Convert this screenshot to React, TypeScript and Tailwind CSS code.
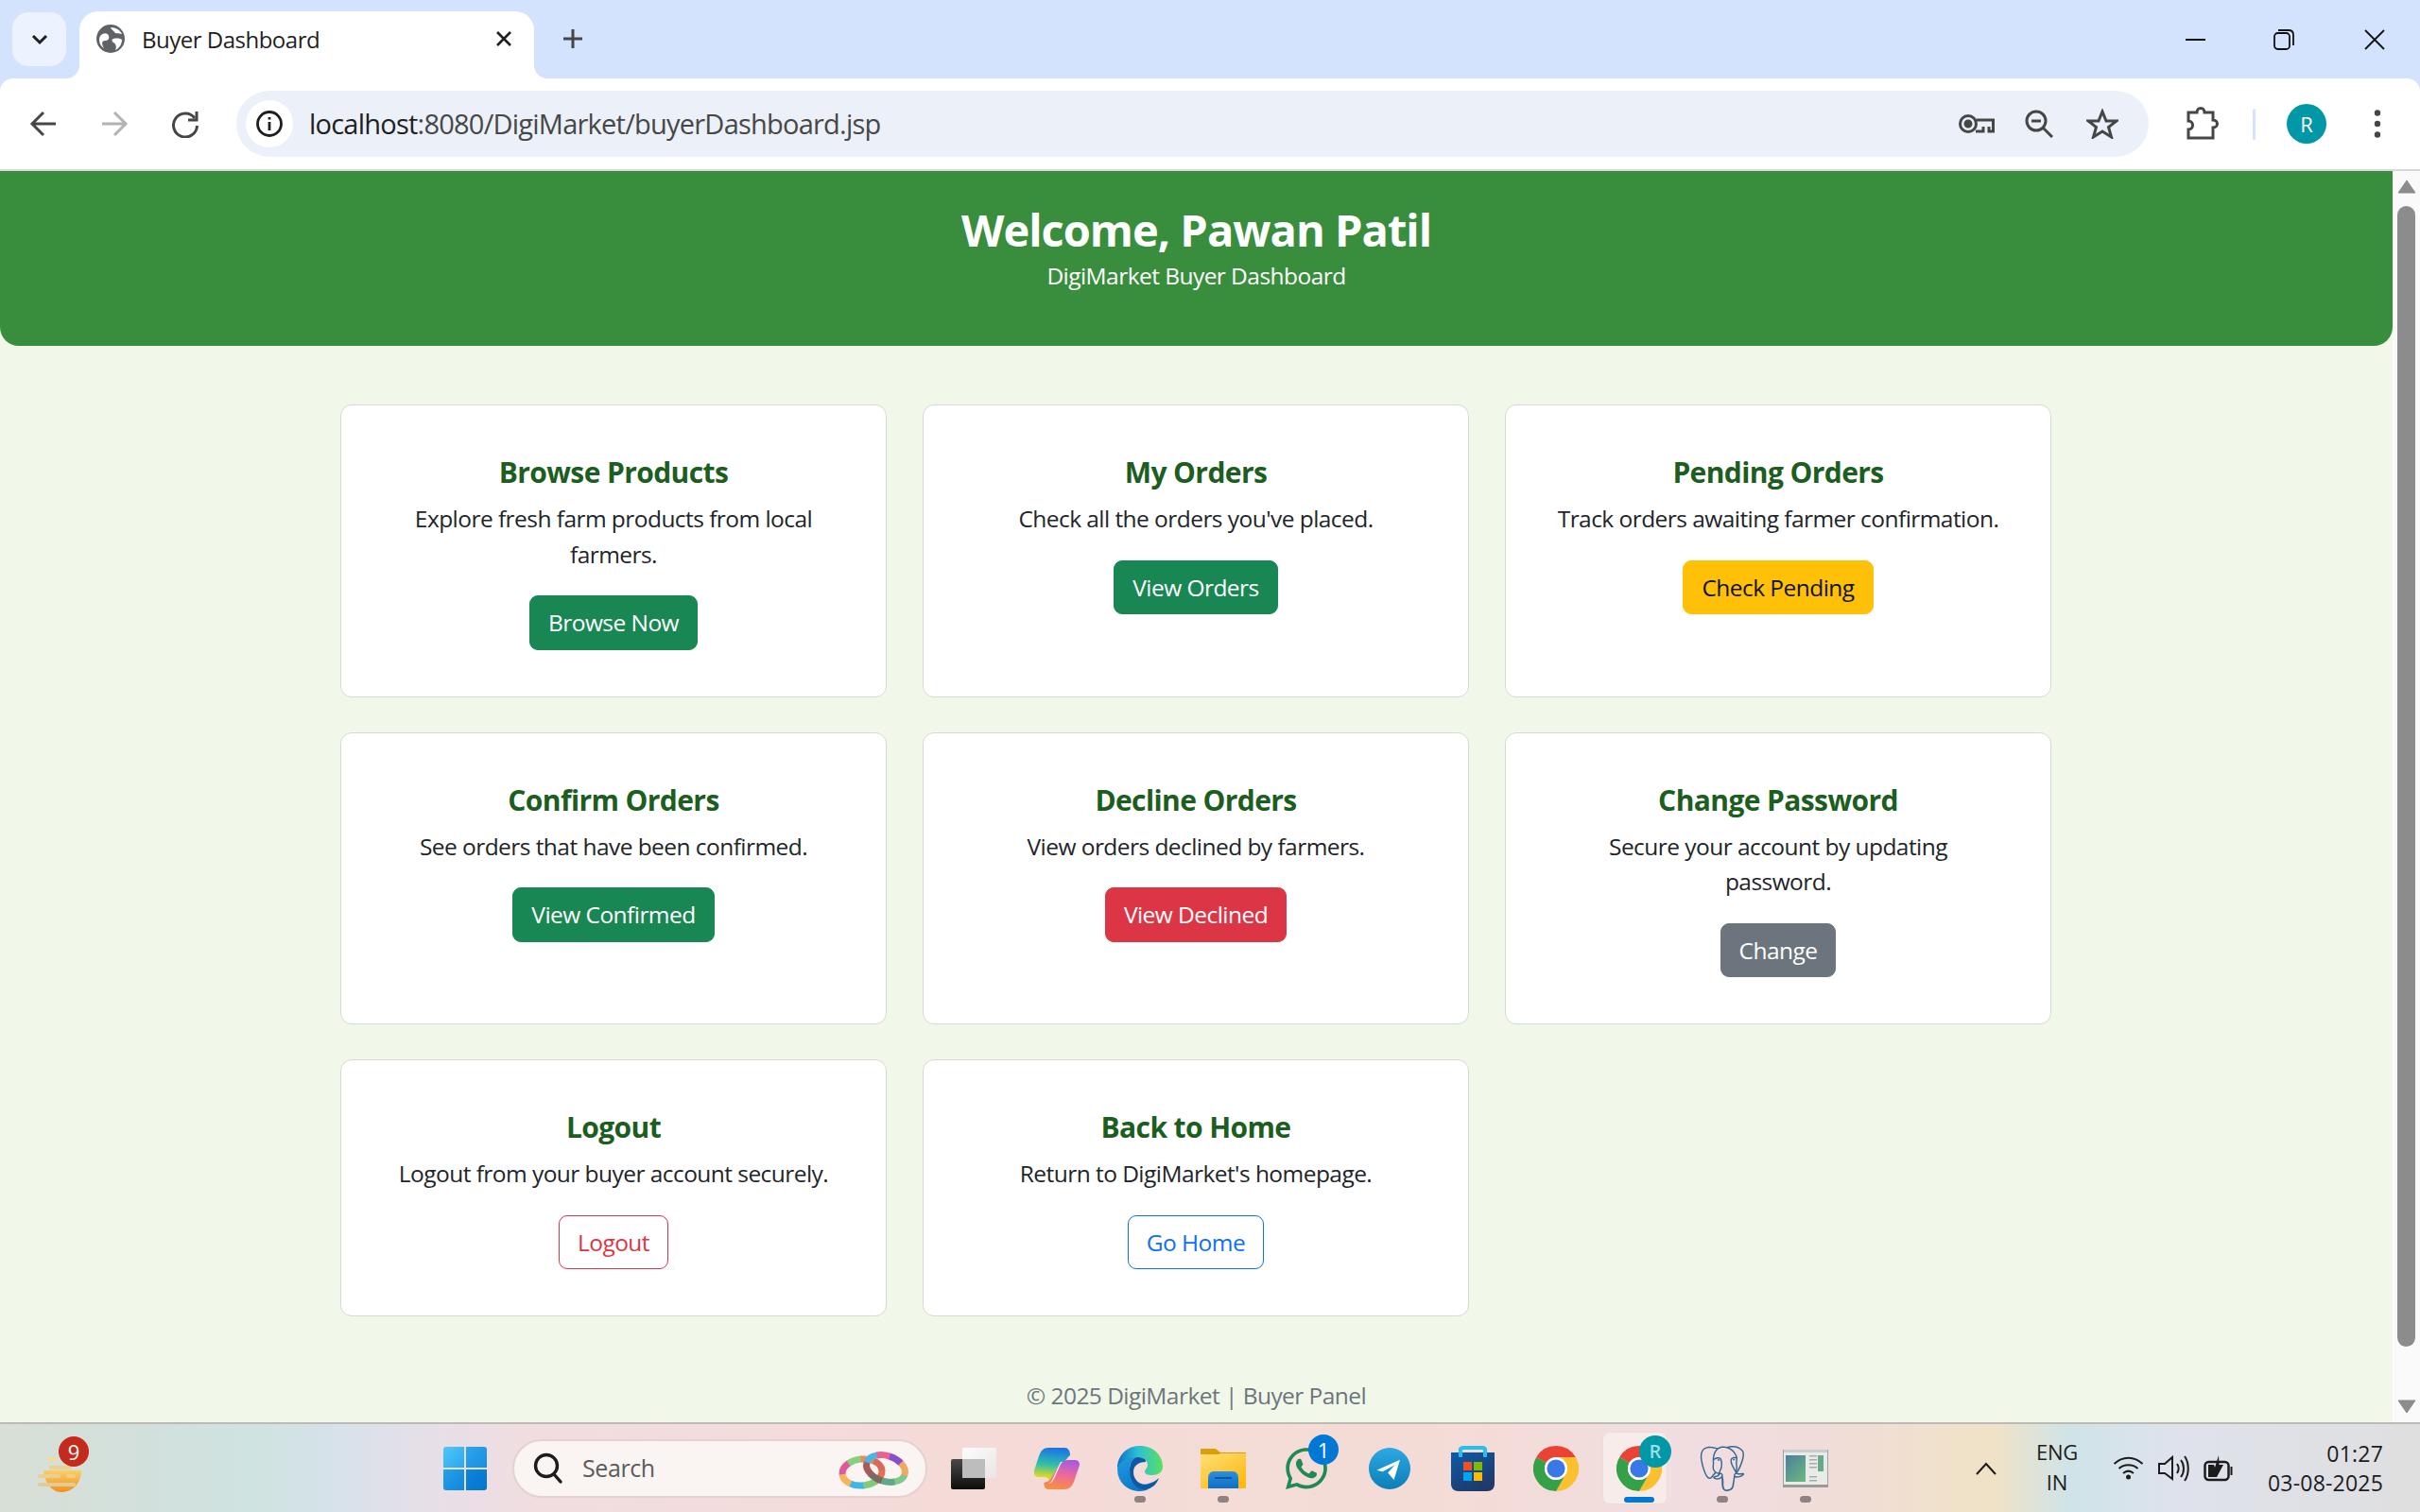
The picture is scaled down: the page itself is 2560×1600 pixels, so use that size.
import React from "react";
import { FaWhatsapp } from "react-icons/fa";
import { SiPostgresql } from "react-icons/si";

type CardT = { t: string; d: string; b: string; c: string };
const cards: CardT[] = [
  { t: "Browse Products", d: "Explore fresh farm products from local farmers.", b: "Browse Now", c: "bg-[#198754] text-white border-[#198754]" },
  { t: "My Orders", d: "Check all the orders you've placed.", b: "View Orders", c: "bg-[#198754] text-white border-[#198754]" },
  { t: "Pending Orders", d: "Track orders awaiting farmer confirmation.", b: "Check Pending", c: "bg-[#ffc107] text-[#111] border-[#ffc107]" },
  { t: "Confirm Orders", d: "See orders that have been confirmed.", b: "View Confirmed", c: "bg-[#198754] text-white border-[#198754]" },
  { t: "Decline Orders", d: "View orders declined by farmers.", b: "View Declined", c: "bg-[#dc3545] text-white border-[#dc3545]" },
  { t: "Change Password", d: "Secure your account by updating\npassword.", b: "Change", c: "bg-[#6c757d] text-white border-[#6c757d]" },
  { t: "Logout", d: "Logout from your buyer account securely.", b: "Logout", c: "bg-white text-[#dc3545] border-[#dc3545]" },
  { t: "Back to Home", d: "Return to DigiMarket's homepage.", b: "Go Home", c: "bg-white text-[#0d6efd] border-[#0d6efd]" },
];

function Card({ t, d, b, c }: CardT) {
  return (
    <div className="bg-white border border-[#d5d8d5] rounded-[12px] px-[50px] pt-[52px] pb-[49px] text-center">
      <h5 className="text-[30px] leading-[37px] font-bold text-[#1b5e20] mb-[12px] tracking-[-0.6px]">{t}</h5>
      <p className="text-[24.5px] leading-[37.5px] text-[#212529] mb-[25px] tracking-[-0.55px] whitespace-pre-line">{d}</p>
      <span className={"inline-block border text-[24.5px] leading-[37.5px] px-[19px] py-[9px] rounded-[9px] tracking-[-0.55px] " + c}>{b}</span>
    </div>
  );
}

function Chrome({ size = 48 }: { size?: number }) {
  return (
    <svg width={size} height={size} viewBox="0 0 48 48">
      <path d="M24 0A24 24 0 0 1 44.8 12H24A12 12 0 0 0 13.6 18L3.2 12A24 24 0 0 1 24 0Z" fill="#ea4335" />
      <path d="M44.8 12A24 24 0 0 1 24 48L34.4 30A12 12 0 0 0 24 12Z" fill="#fbc02d" />
      <path d="M3.2 12A24 24 0 0 0 24 48L34.4 30A12 12 0 0 1 13.6 18Z" fill="#34a047" />
      <circle cx="24" cy="24" r="12" fill="#fff" />
      <circle cx="24" cy="24" r="9.6" fill="#3b78e7" />
    </svg>
  );
}

function Rings() {
  const a = ["#e8724e", "#7ecb7a", "#3fb7e6", "#f7b45a", "#e2589c", "#8ad07c", "#f08a5a", "#d86a5a"];
  const b = ["#7ccb86", "#5fa98a", "#7a6a62", "#a85a5a", "#4fb5e0", "#e8628e", "#8a4fc8", "#f0a860"];
  return (
    <svg width="76" height="44" viewBox="0 0 76 44">
      <g fill="none" strokeWidth="7">
        <g transform="rotate(-6 25 26)">
          {a.map((col, i) => (
            <ellipse key={i} cx="25" cy="26" rx="21" ry="14" stroke={col} pathLength={80} strokeDasharray={`10.5 69.5`} strokeDashoffset={-i * 10} />
          ))}
        </g>
        <g transform="rotate(18 50 22)">
          {b.map((col, i) => (
            <ellipse key={i} cx="50" cy="22" rx="21" ry="13.5" stroke={col} pathLength={80} strokeDasharray={`10.5 69.5`} strokeDashoffset={-i * 10} />
          ))}
        </g>
      </g>
    </svg>
  );
}

function Dot() {
  return <span className="absolute bottom-[10px] left-1/2 -translate-x-1/2 w-[12px] h-[7px] rounded-full bg-[#8f8280]" />;
}

function Slot({ children, dot }: { children: React.ReactNode; dot?: boolean }) {
  return (
    <div className="relative w-[88px] h-full flex items-center justify-center shrink-0">
      {children}
      {dot && <Dot />}
    </div>
  );
}

const CopilotIcon = () => (
  <svg width="48" height="44" viewBox="0 0 48 44">
    <defs>
      <linearGradient id="cp1" x1="0.5" y1="0" x2="0.4" y2="1">
        <stop offset="0" stopColor="#1a72e8" />
        <stop offset="0.5" stopColor="#30c0a8" />
        <stop offset="0.85" stopColor="#d8d828" />
        <stop offset="1" stopColor="#e8d020" />
      </linearGradient>
      <linearGradient id="cp2" x1="0.6" y1="0" x2="0.4" y2="1">
        <stop offset="0" stopColor="#a858e0" />
        <stop offset="0.5" stopColor="#ec6a9c" />
        <stop offset="1" stopColor="#f98f3c" />
      </linearGradient>
    </defs>
    <path d="M15 0H32C36 0 38 3 38 8C35 11 33 13 31 17L26 30C24 34 21 36 17 36C15 32 13 31 11 31H5C1 31 -1 28 0 24L5 9C7 3 10 0 15 0Z" fill="url(#cp1)" />
    <path d="M36 13H43C47 13 49 16 47.5 20L42 36C40 41 37 44 32 44H16C12 44 10 41 10.5 37C13 36 16 36 18 32L25 21C28 16 31 13 36 13Z" fill="url(#cp2)" />
    <path d="M28 15C25 20 22 28 19 34C18 36 17 37 15 38C17 38 19 37 21 33L26 22C27 19 28 17 30 15Z" fill="#fff" fillOpacity="0.85" />
  </svg>
);

const EdgeIcon = () => (
  <svg width="48" height="48" viewBox="0 0 48 48">
    <defs>
      <linearGradient id="ed1" x1="0" y1="0.5" x2="1" y2="0.5">
        <stop offset="0" stopColor="#0c6fc4" />
        <stop offset="0.45" stopColor="#2cc0d8" />
        <stop offset="1" stopColor="#5be05e" />
      </linearGradient>
      <linearGradient id="ed2" x1="0" y1="0" x2="0.6" y2="1">
        <stop offset="0" stopColor="#1d9be0" />
        <stop offset="1" stopColor="#0d78c8" />
      </linearGradient>
    </defs>
    <path d="M24 0C38 0 48 10 48 22C48 28 43 31 37 31C32 31 29 30 29 27C29 25 32 24 32 20C32 15 27 12 21 12C12 12 3 17 0 24C0 10 10 0 24 0Z" fill="url(#ed1)" />
    <path d="M0 24C2 16 11 12 20 12C15 14 13 19 13 24C13 34 21 45 33 46C30 47 27 48 24 48C10 48 0 38 0 24Z" fill="url(#ed2)" />
    <path d="M20 12C26 12 31 14 30 17C22 17 17 21 17 28C17 37 26 43 33 40C37 39 41 37 44 34C41 43 33 47 27 46C19 46 13 36 13 26C13 19 15 14 20 12Z" fill="#0c5aa6" />
  </svg>
);

const FolderIcon = () => (
  <svg width="48" height="42" viewBox="0 0 48 42">
    <defs>
      <linearGradient id="fo" x1="0" y1="0" x2="0.8" y2="1">
        <stop offset="0" stopColor="#ffdf78" />
        <stop offset="1" stopColor="#fcb90f" />
      </linearGradient>
      <linearGradient id="fb" x1="0" y1="0" x2="0" y2="1">
        <stop offset="0" stopColor="#2a8fe0" />
        <stop offset="1" stopColor="#0f6fc4" />
      </linearGradient>
    </defs>
    <path d="M1 0H16L21 4H47C47.6 4 48 4.4 48 5V10H0V1C0 .4.4 0 1 0Z" fill="#dc9f07" />
    <path d="M0 6H19L22 5H47C47.6 5 48 5.4 48 6V41C48 41.6 47.6 42 47 42H1C.4 42 0 41.6 0 41Z" fill="url(#fo)" />
    <path d="M8 42V32C8 27 10 24 14 24H34C38 24 40 27 40 32V42Z" fill="url(#fb)" />
    <rect x="15" y="30" width="18" height="2" fill="#0c5a9e" />
  </svg>
);

const TelegramIcon = () => (
  <svg width="44" height="44" viewBox="0 0 48 48">
    <defs>
      <linearGradient id="tg" x1="0.5" y1="0" x2="0.5" y2="1">
        <stop offset="0" stopColor="#2ca8e2" />
        <stop offset="1" stopColor="#0b7fb8" />
      </linearGradient>
    </defs>
    <circle cx="24" cy="24" r="24" fill="url(#tg)" />
    <path d="M9 26L36 14L29 37L22 29L30 20L16 27.5Z" fill="#fff" />
  </svg>
);

const StoreIcon = () => (
  <svg width="46" height="48" viewBox="0 0 46 48">
    <defs>
      <linearGradient id="st" x1="0" y1="0" x2="0.6" y2="1">
        <stop offset="0" stopColor="#0b5cab" />
        <stop offset="1" stopColor="#1f3a68" />
      </linearGradient>
    </defs>
    <path d="M10 12V5C10 3 11 2 13 2H33C35 2 36 3 36 5V12" fill="none" stroke="#27c0ee" strokeWidth="4" />
    <path d="M0 7H46V40C46 45 43 48 38 48H8C3 48 0 45 0 40Z" fill="url(#st)" />
    <rect x="8" y="2" width="4" height="10" rx="1" fill="#27c0ee" />
    <rect x="34" y="2" width="4" height="10" rx="1" fill="#27c0ee" />
    <rect x="13" y="17" width="9" height="9" fill="#f25022" />
    <rect x="24" y="17" width="9" height="9" fill="#7fba00" />
    <rect x="13" y="28" width="9" height="9" fill="#00a4ef" />
    <rect x="24" y="28" width="9" height="9" fill="#ffb900" />
  </svg>
);

const ThumbIcon = () => (
  <svg width="48" height="40" viewBox="0 0 48 40">
    <defs>
      <linearGradient id="th" x1="0" y1="0" x2="0.8" y2="1">
        <stop offset="0" stopColor="#4a7ea0" />
        <stop offset="1" stopColor="#6bb57e" />
      </linearGradient>
    </defs>
    <rect x="0.5" y="0.5" width="47" height="38" fill="#e8ebe8" stroke="#a0a4a4" />
    <rect x="0" y="37" width="48" height="3" fill="#9a9a9a" />
    <rect x="1" y="0" width="46" height="3" fill="#c8cccc" />
    <rect x="3" y="6" width="21" height="28" fill="url(#th)" />
    <rect x="28" y="6" width="8" height="1.5" fill="#aaa" />
    <rect x="28" y="10" width="8" height="1.5" fill="#aaa" />
    <rect x="28" y="14" width="8" height="1.5" fill="#aaa" />
    <rect x="28" y="18" width="8" height="1.5" fill="#aaa" />
    <rect x="28" y="28" width="8" height="1.5" fill="#aaa" />
    <rect x="28" y="32" width="8" height="1.5" fill="#aaa" />
    <rect x="37" y="6" width="6" height="17" fill="#6aa888" />
  </svg>
);

function TabStrip() {
  return (
    <div className="h-[83px] bg-[#d3e3fd] flex items-start shrink-0">
      <div className="w-[57px] h-[57px] mt-[13px] ml-[13px] rounded-[17px] bg-[#ecf2fe] flex items-center justify-center">
        <svg width="20" height="14" viewBox="0 0 20 14"><path d="M3 3L10 10L17 3" fill="none" stroke="#1f1f1f" strokeWidth="3" /></svg>
      </div>
      <div className="relative w-[481px] h-[71px] mt-[12px] ml-[14px] bg-white rounded-t-[20px] flex items-center">
        <svg className="absolute left-[-14px] bottom-0" width="14" height="14" viewBox="0 0 14 14"><path d="M14 0V14H0A14 14 0 0 0 14 0Z" fill="#fff" /></svg>
        <svg className="absolute right-[-14px] bottom-0" width="14" height="14" viewBox="0 0 14 14"><path d="M0 0V14H14A14 14 0 0 1 0 0Z" fill="#fff" /></svg>
        <svg className="ml-[18px] mb-[13px]" width="30" height="30" viewBox="0 0 30 30">
          <circle cx="15" cy="15" r="15" fill="#5f6368" />
          <path d="M4 12C8 8 12 9 13 12C14 15 12 17 9 17C6 17 5 20 8 25C3 22 2 16 4 12ZM15 3C21 3 25 6 27 10C23 9 20 10 19 8C18 6 16 6 15 3ZM18 15C22 14 26 15 27 16C27 21 24 25 20 27C22 23 20 20 18 19C16 18 16 15 18 15Z" fill="#fff" />
        </svg>
        <span className="ml-[18px] mb-[11px] text-[24px] leading-[30px] text-[#1f1f1f] tracking-[-0.5px]">Buyer Dashboard</span>
        <svg className="absolute left-[440px] top-[20px]" width="18" height="18" viewBox="0 0 18 18"><path d="M2 2L16 16M16 2L2 16" stroke="#1f1f1f" strokeWidth="2.6" /></svg>
      </div>
      <svg className="mt-[29px] ml-[29px]" width="24" height="24" viewBox="0 0 24 24"><path d="M12 2V22M2 12H22" stroke="#444746" strokeWidth="3" /></svg>
      <div className="ml-auto flex h-[83px] pr-[1px]">
        <div className="w-[90px] flex items-center justify-center"><div className="w-[21px] h-[2px] bg-[#111]" /></div>
        <div className="w-[98px] flex items-center justify-center">
          <svg width="22" height="22" viewBox="0 0 22 22" fill="none" stroke="#111" strokeWidth="1.8"><rect x="1" y="4" width="16" height="17" rx="3.5" /><path d="M5 1H16C19 1 21 3 21 6V17" /></svg>
        </div>
        <div className="w-[94px] flex items-center justify-center">
          <svg width="22" height="22" viewBox="0 0 22 22"><path d="M1 1L21 21M21 1L1 21" stroke="#111" strokeWidth="1.8" /></svg>
        </div>
      </div>
    </div>
  );
}

function Toolbar() {
  return (
    <div className="bg-[#d3e3fd] shrink-0">
      <div className="h-[96px] bg-white rounded-t-[14px] flex items-center pl-[8px]">
        <div className="w-[75px] flex justify-center">
          <svg width="30" height="30" viewBox="0 0 30 30" fill="none" stroke="#444746" strokeWidth="3"><path d="M28 15H4M15 3L3 15L15 27" /></svg>
        </div>
        <div className="w-[75px] flex justify-center">
          <svg width="30" height="30" viewBox="0 0 30 30" fill="none" stroke="#b2b2b2" strokeWidth="3"><path d="M2 15H26M15 3L27 15L15 27" /></svg>
        </div>
        <div className="w-[75px] flex justify-center">
          <svg width="30" height="30" viewBox="0 0 30 30" fill="none" stroke="#444746" strokeWidth="3"><path d="M25 9A12.5 12.5 0 1 0 27.5 17" /><path d="M27 2V11H18" /></svg>
        </div>
        <div className="ml-[17px] w-[2023px] h-[70px] rounded-full bg-[#ecf1f9] flex items-center">
          <div className="ml-[10px] w-[50px] h-[50px] rounded-full bg-white flex items-center justify-center">
            <svg width="30" height="30" viewBox="0 0 30 30" fill="none" stroke="#1f1f1f" strokeWidth="2.8"><circle cx="15" cy="15" r="12.5" /><path d="M15 13V22M15 8V10.5" /></svg>
          </div>
          <span className="ml-[17px] text-[29px] leading-[36px] tracking-[-0.77px] text-[#1f1f1f]">localhost<span className="text-[#474747]">:8080/DigiMarket/buyerDashboard.jsp</span></span>
          <div className="ml-auto flex items-center pr-[32px]">
            <svg width="38" height="24" viewBox="0 0 38 24" fill="none" stroke="#444746" strokeWidth="3"><circle cx="10" cy="12" r="8.5" /><circle cx="10" cy="12" r="3" fill="#444746" /><path d="M18.5 8H36.5V20H32V15M26 15V20H18" /></svg>
            <svg className="ml-[32px]" width="30" height="30" viewBox="0 0 30 30" fill="none" stroke="#444746" strokeWidth="3"><circle cx="12" cy="12" r="10" /><path d="M19 19L29 29M7 12H17" /></svg>
            <svg className="ml-[35px]" width="34" height="32" viewBox="0 0 34 32" fill="none" stroke="#444746" strokeWidth="3" strokeLinejoin="miter"><path d="M17 3L21 13H32L23.5 19.5L26.5 30L17 24L7.5 30L10.5 19.5L2 13H13Z" /></svg>
          </div>
        </div>
        <svg className="ml-[39px]" width="36" height="36" viewBox="0 0 36 36" fill="none" stroke="#444746" strokeWidth="3"><path d="M3 6H12C12 0 20 0 20 6H29V14C35 14 35 22 29 22V33H3V24C9 24 9 15 3 15Z" /></svg>
        <div className="ml-[35px] w-[3px] h-[33px] rounded-full bg-[#d3e3fd]" />
        <div className="ml-[33px] w-[42px] h-[42px] rounded-full bg-[#0097a7] flex items-center justify-center text-white text-[22px] leading-none">R</div>
        <svg className="ml-[50px]" width="8" height="30" viewBox="0 0 8 30" fill="#444746"><circle cx="4" cy="3.5" r="3.2" /><circle cx="4" cy="15" r="3.2" /><circle cx="4" cy="26.5" r="3.2" /></svg>
      </div>
    </div>
  );
}

function Scrollbar() {
  return (
    <div className="w-[29px] h-full bg-[#fafafa] flex flex-col items-center pt-[9px] pb-[9px] shrink-0">
      <svg width="20" height="15" viewBox="0 0 20 15"><path d="M10 1L19 14H1Z" fill="#8c8c8c" stroke="#8c8c8c" strokeLinejoin="round" /></svg>
      <div className="mt-[13px] w-[19px] h-[1207px] rounded-full bg-[#8c8c8c]" />
      <svg className="mt-auto" width="20" height="15" viewBox="0 0 20 15"><path d="M10 14L19 1H1Z" fill="#8c8c8c" stroke="#8c8c8c" strokeLinejoin="round" /></svg>
    </div>
  );
}

function Taskbar() {
  return (
    <div className="h-[95px] shrink-0 border-t-2 border-[#bcbab4] flex items-center bg-[linear-gradient(90deg,#d8dfd6_0%,#d2e0dc_6%,#cfe3e0_10.5%,#d6e2ea_13.7%,#e6dfe8_17.6%,#f1dde0_22%,#f4dbd8_39%,#f4dcd6_59%,#f1dde0_70%,#f0ddd8_76%,#f0e2c6_82.4%,#cfe4e8_85.5%,#dfe2ec_90%,#dfdfdf_100%)]">
      <div className="relative ml-[40px] w-[50px] h-[60px] shrink-0">
        <svg className="absolute left-0 top-[18px]" width="50" height="38" viewBox="0 0 50 38">
          <defs>
            <linearGradient id="wd" x1="0" y1="0" x2="0" y2="1"><stop offset="0" stopColor="#f8cf6a" /><stop offset="1" stopColor="#f3901a" /></linearGradient>
          </defs>
          <path d="M6 14H46C46 28 36 37 25 37C14 37 7 26 6 14Z" fill="url(#wd)" />
          <rect x="10" y="0" width="10" height="4" rx="2" fill="#f6dc98" />
          <rect x="12" y="9" width="24" height="4" rx="2" fill="#ecd08c" />
          <rect x="0" y="18" width="24" height="4" rx="2" fill="#e8cf96" />
          <rect x="30" y="18" width="10" height="4" rx="2" fill="#f2cf7a" />
          <rect x="0" y="27" width="40" height="4" rx="2" fill="#e3cb98" />
        </svg>
        <div className="absolute left-[22px] top-[-4px] w-[32px] h-[32px] rounded-full bg-[#c42b1c] text-white text-[22px] leading-[32px] text-center">9</div>
      </div>
      <div className="ml-[379px] w-[46px] h-[46px] grid grid-cols-2 gap-[2px] shrink-0">
        <div className="rounded-tl-[3px] bg-[linear-gradient(135deg,#4fc8fb,#2aa6ec)]" />
        <div className="rounded-tr-[3px] bg-[linear-gradient(135deg,#2aa6ec,#1a8fe2)]" />
        <div className="rounded-bl-[3px] bg-[linear-gradient(135deg,#26a1ea,#1086dc)]" />
        <div className="rounded-br-[3px] bg-[linear-gradient(135deg,#1086dc,#0274cf)]" />
      </div>
      <div className="ml-[27px] w-[439px] h-[62px] rounded-full bg-[#faf4f3] border-2 border-[#e3d2d0] flex items-center shrink-0">
        <svg className="ml-[20px]" width="32" height="34" viewBox="0 0 32 34" fill="none" stroke="#1c1c1c" strokeWidth="3.4"><circle cx="14" cy="14" r="11.5" /><path d="M22 23L29 31" strokeLinecap="round" /></svg>
        <span className="ml-[20px] text-[25px] leading-none text-[#5c5c5c] tracking-[-0.4px]">Search</span>
        <div className="ml-auto mr-[16px] flex"><Rings /></div>
      </div>
      <div className="ml-[5px] flex h-full shrink-0">
        <Slot>
          <div className="relative w-[48px] h-[44px]">
            <svg width="48" height="44" viewBox="0 0 48 44">
              <defs>
                <linearGradient id="tv1" x1="0" y1="0" x2="0" y2="1"><stop offset="0" stopColor="#4a4a4a" /><stop offset="1" stopColor="#0c0c0c" /></linearGradient>
                <linearGradient id="tv2" x1="0" y1="0" x2="1" y2="1"><stop offset="0" stopColor="#ffffff" /><stop offset="1" stopColor="#e8e6e6" /></linearGradient>
              </defs>
              <rect x="0" y="12" width="36" height="32" rx="2" fill="url(#tv1)" />
              <rect x="12" y="0" width="36" height="32" rx="2" fill="url(#tv2)" fillOpacity="0.92" />
              <rect x="12" y="12" width="24" height="20" fill="#bdbdbd" />
            </svg>
          </div>
        </Slot>
        <Slot><CopilotIcon /></Slot>
        <Slot dot><EdgeIcon /></Slot>
        <Slot dot><FolderIcon /></Slot>
        <Slot>
          <FaWhatsapp size={50} color="#1f8a55" />
          <div className="absolute left-[46px] top-[11px] w-[32px] h-[32px] rounded-full bg-[#0078d4] text-white text-[22px] leading-[32px] text-center">1</div>
        </Slot>
        <Slot><TelegramIcon /></Slot>
        <Slot><StoreIcon /></Slot>
        <Slot><Chrome /></Slot>
        <Slot>
          <div className="absolute left-[5px] top-[8px] w-[73px] h-[77px] rounded-[8px] bg-[#f1e1de]" />
          <div className="absolute left-[5px] top-[8px] w-[69px] h-[77px] rounded-[8px] bg-[#f8eceb] border border-[#ebdcd9]" />
          <div className="relative"><Chrome /></div>
          <div className="absolute left-[44px] top-[12px] w-[34px] h-[34px] rounded-full bg-[#0097a7] text-[#9fdde4] text-[20px] leading-[34px] text-center font-semibold">R</div>
          <div className="absolute left-[28px] bottom-[10px] w-[32px] h-[6px] rounded-full bg-[#0078d4]" />
        </Slot>
        <Slot dot><SiPostgresql size={48} color="#336791" /></Slot>
        <Slot dot><ThumbIcon /></Slot>
      </div>
      <svg className="ml-[136px] shrink-0" width="22" height="14" viewBox="0 0 22 14" fill="none" stroke="#1c1c1c" strokeWidth="2"><path d="M1 13L11 2L21 13" /></svg>
      <div className="ml-[41px] mb-[3px] w-[46px] text-center text-[22px] leading-[32px] text-[#1c1c1c] shrink-0 tracking-[-0.2px]">
        <div>ENG</div>
        <div>IN</div>
      </div>
      <svg className="ml-[36px] shrink-0" width="33" height="25" viewBox="0 0 33 25" fill="none" stroke="#1c1c1c" strokeWidth="2"><path d="M1.5 8C10 -0.5 23 -0.5 31.5 8M6.5 13C12 8 21 8 26.5 13M11 18C14.5 15 18.5 15 22 18" /><circle cx="16.5" cy="22" r="2.5" fill="#1c1c1c" stroke="none" /></svg>
      <svg className="ml-[15px] shrink-0" width="33" height="28" viewBox="0 0 33 28" fill="none" stroke="#1c1c1c" strokeWidth="2"><path d="M1 9H7L15 2V25L7 19H1Z" /><path d="M20 9C22 12 22 16 20 19M24 5C28 10 28 18 24 23M28 1C33 8 33 20 28 27" /></svg>
      <svg className="ml-[15px] shrink-0" width="31" height="28" viewBox="0 0 31 28" fill="none"><rect x="1.5" y="7" width="25" height="19" rx="4" stroke="#1c1c1c" strokeWidth="2.5" /><path d="M29.5 12V21" stroke="#1c1c1c" strokeWidth="2" /><path d="M5 10H11L12 13L16 0L16.5 10H21L14 23H5Z" fill="#1c1c1c" /></svg>
      <div className="ml-auto mr-[39px] text-right text-[23px] leading-[31px] text-[#1c1c1c] shrink-0 tracking-[0.2px]">
        <div>01:27</div>
        <div>03-08-2025</div>
      </div>
    </div>
  );
}

export default function App() {
  return (
    <div className="w-[2560px] h-[1600px] overflow-hidden flex flex-col font-['Open_Sans','Noto_Sans',sans-serif]">
      <TabStrip />
      <Toolbar />
      <div className="h-[2px] bg-[#d8d8d8] shrink-0" />
      <div className="h-[1324px] flex shrink-0">
        <main className="flex-1 bg-[#f1f8e9]">
          <header className="h-[185px] bg-[#388e3c] rounded-b-[20px] text-center text-white pt-[33px]">
            <h1 className="text-[47px] leading-[59px] font-bold tracking-[-1px]">Welcome, Pawan Patil</h1>
            <p className="text-[24.5px] leading-[37.5px] tracking-[-0.55px]">DigiMarket Buyer Dashboard</p>
          </header>
          <div className="ml-[360px] mt-[62px] w-[1810px] grid grid-cols-3 gap-x-[38px] gap-y-[37px]">
            {cards.map((c) => (
              <Card key={c.t} {...c} />
            ))}
          </div>
          <p className="mt-[65px] text-center text-[24.5px] leading-[37px] text-[#6c757d] tracking-[-0.55px]">© 2025 DigiMarket | Buyer Panel</p>
        </main>
        <Scrollbar />
      </div>
      <Taskbar />
    </div>
  );
}
